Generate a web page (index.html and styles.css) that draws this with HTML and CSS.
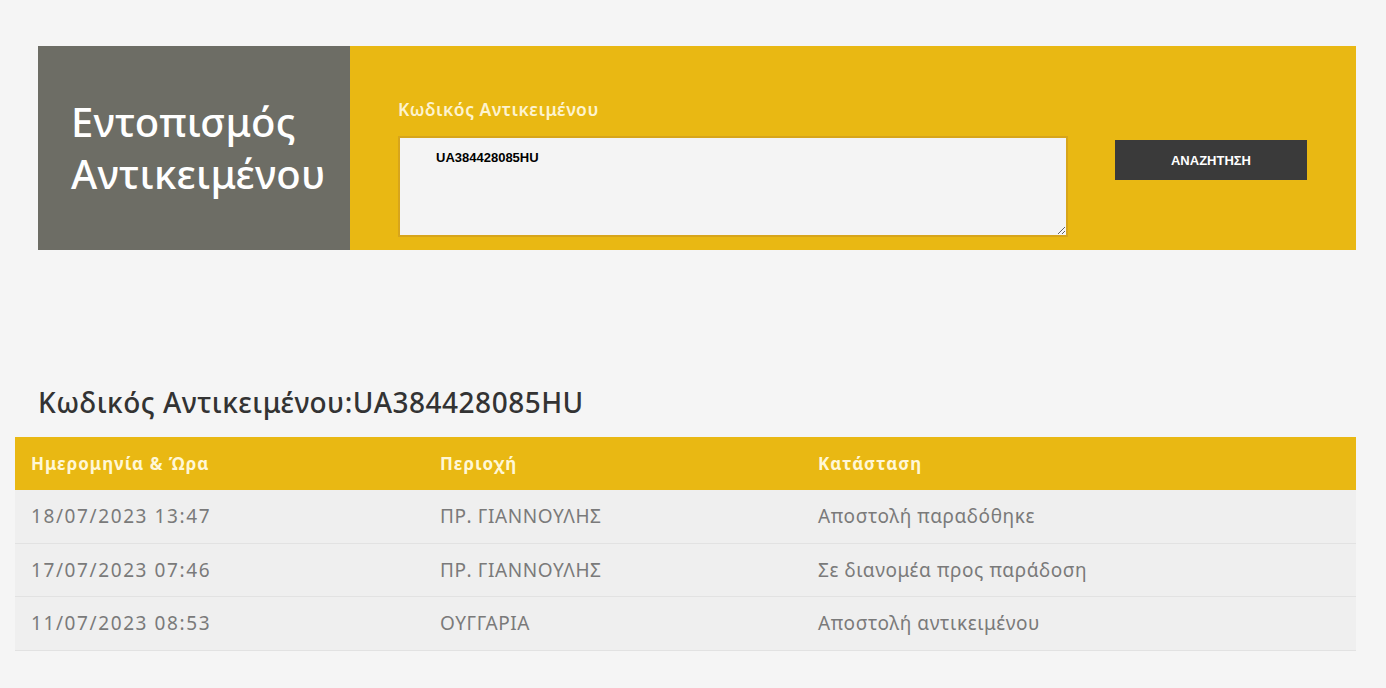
FILE: index.html
```html
<!DOCTYPE html>
<html lang="el">
<head>
  <meta charset="UTF-8" />
  <title>Εντοπισμός Αντικειμένου</title>
  <link rel="stylesheet" href="styles.css">
</head>
<body>

  <!-- Search banner -->
  <div class="track-box">
    <div class="track-title">
      <h1>Εντοπισμός Αντικειμένου</h1>
    </div>
    <div class="track-form">
      <div class="field">
        <label for="code">Κωδικός Αντικειμένου</label>
        <textarea id="code">UA384428085HU</textarea>
      </div>
      <button class="search-btn">ΑΝΑΖΗΤΗΣΗ</button>
    </div>
  </div>

  <!-- Results -->
  <div class="results">
    <h2>Κωδικός Αντικειμένου:UA384428085HU</h2>
    <div class="history">
      <div class="row head">
        <div>Ημερομηνία &amp; Ώρα</div>
        <div>Περιοχή</div>
        <div>Κατάσταση</div>
      </div>
      <div class="row">
        <div class="num">18/07/2023 13:47</div>
        <div>ΠΡ. ΓΙΑΝΝΟΥΛΗΣ</div>
        <div>Αποστολή παραδόθηκε</div>
      </div>
      <div class="row">
        <div class="num">17/07/2023 07:46</div>
        <div>ΠΡ. ΓΙΑΝΝΟΥΛΗΣ</div>
        <div>Σε διανομέα προς παράδοση</div>
      </div>
      <div class="row">
        <div class="num">11/07/2023 08:53</div>
        <div>ΟΥΓΓΑΡΙΑ</div>
        <div>Αποστολή αντικειμένου</div>
      </div>
    </div>
  </div>

</body>
</html>
```

FILE: styles.css
```css
body {
  margin: 0;
  background: #f5f5f5;
  font-family: 'Noto Sans', 'Open Sans', sans-serif;
  padding: 46px 30px 0 15px;
}

.track-box {
  display: flex;
  margin-left: 23px;
  height: 204px;
  background: #e9b813;
}

.track-title {
  width: 312px;
  background: #6d6d65;
  display: flex;
  align-items: center;
  padding-left: 33px;
  box-sizing: border-box;
}

.track-title h1 {
  margin: 0;
  color: #fff;
  font-size: 40px;
  font-weight: 500;
  line-height: 52px;
  letter-spacing: 0.3px;
}

.track-form {
  flex: 1;
  display: flex;
  align-items: flex-start;
  padding: 52px 0 0 48px;
}

.field label {
  display: block;
  color: #fdf3cf;
  font-size: 17.5px;
  font-weight: 600;
  letter-spacing: 0.5px;
  line-height: 22px;
  margin-bottom: 16px;
}

.field textarea {
  display: block;
  width: 670px;
  height: 101px;
  box-sizing: border-box;
  background: #f4f4f4;
  border: 2px solid #d7a51b;
  padding: 12px 36px;
  font-family: 'Liberation Sans', Arial, sans-serif;
  font-size: 13px;
  font-weight: bold;
  color: #000;
  resize: both;
  outline: none;
}

.search-btn {
  margin: 42px 0 0 47px;
  width: 192px;
  height: 40px;
  border: none;
  background: #3a3a3a;
  color: #fff;
  font-family: 'Liberation Sans', Arial, sans-serif;
  font-size: 13px;
  font-weight: bold;
  cursor: pointer;
}

.results {
  margin-top: 132px;
}

.results h2 {
  margin: 0 0 15px 23px;
  font-size: 28px;
  font-weight: 500;
  letter-spacing: 0.5px;
  color: #333;
  line-height: 40px;
}

.row {
  display: grid;
  grid-template-columns: 409px 378px 1fr;
  height: 53.5px;
  align-items: center;
  background: #efefef;
  border-bottom: 1px solid #e2e2e2;
  box-sizing: border-box;
  color: #7a7a7a;
  font-size: 19px;
  letter-spacing: 0.6px;
}

.row div {
  padding-left: 16px;
}

.row .num {
  letter-spacing: 1.6px;
}

.row.head {
  height: 53px;
  background: #e9b813;
  border-bottom: none;
  color: #fff7d6;
  font-size: 17px;
  font-weight: 700;
  letter-spacing: 1px;
}
```
